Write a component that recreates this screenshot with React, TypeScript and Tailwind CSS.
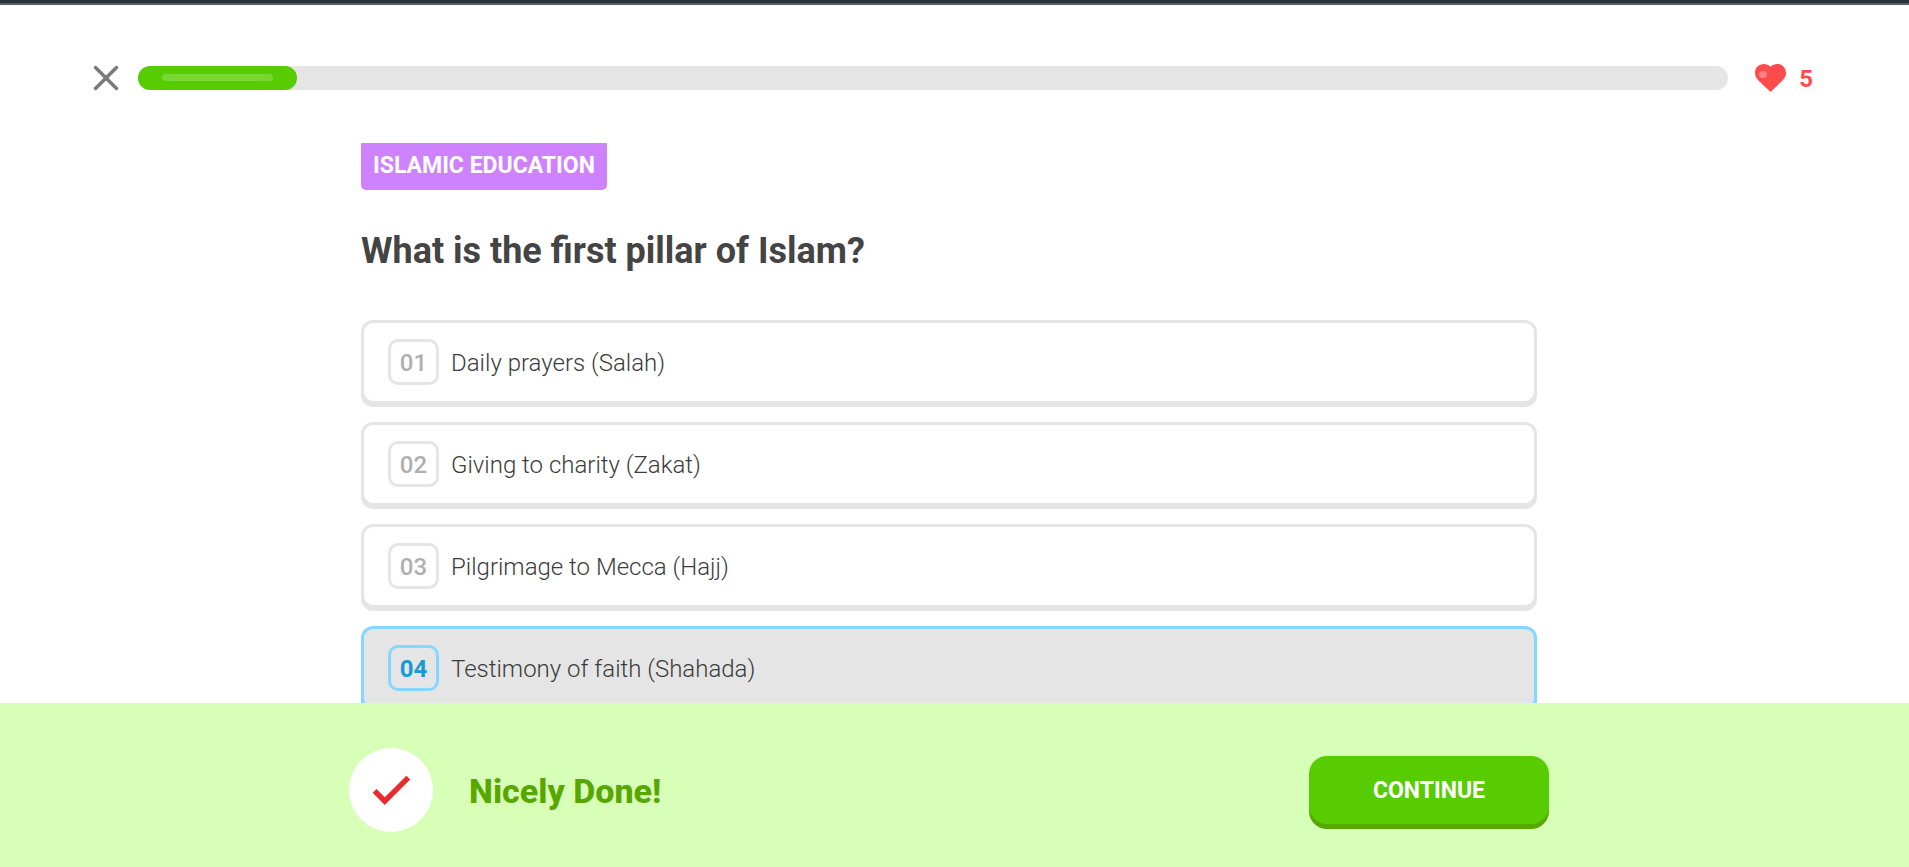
import { useState } from "react";
import { X } from "lucide-react";

const options = [
  "Daily prayers (Salah)",
  "Giving to charity (Zakat)",
  "Pilgrimage to Mecca (Hajj)",
  "Testimony of faith (Shahada)",
];

const progress = 10;

function HeartIcon() {
  return (
    <svg viewBox="0 0 31 28" className="h-7 w-[31px]" aria-hidden="true">
      <path
        fill="#ff4b4b"
        d="M15.5 2.800C13.700 1 11.300 0 8.800 0 3.900 0 0 3.800 0 8.800c0 2.800 1.200 5.300 3.200 7.500L15.500 28l12.300-11.700C29.800 14.100 31 11.600 31 8.800 31 3.800 27.100 0 22.200 0c-2.500 0-4.900 1-6.700 2.800z"
      />
      <rect x="4" y="7" width="8" height="7" rx="3.500" fill="#fff" fillOpacity="0.3" />
    </svg>
  );
}

function CheckIcon() {
  return (
    <svg viewBox="0 0 24 24" className="size-[50px]" aria-hidden="true">
      <path
        fill="#ea2b2b"
        d="M9 15.450 5.050 11.500l-1.850 1.850L9 19.150 21.200 7l-1.850-1.850-.35.350z"
      />
    </svg>
  );
}

export default function App() {
  const [selected, setSelected] = useState(3);

  return (
    <div className="flex h-screen flex-col border-t-3 border-[#263238] bg-white font-['Roboto',sans-serif] text-[#444444]">
      <div className="h-0.5 shrink-0 bg-[#546068]" />

      <header className="flex h-[138px] shrink-0 items-start pt-[52px] pr-24 pl-[85px]">
        <div className="flex h-[42px] flex-1 items-center">
          <button type="button" aria-label="Close" className="mr-[11px] text-[#7a7a7a]">
            <X size={42} strokeWidth={2} />
          </button>
          <div
            role="progressbar"
            aria-label="Lesson progress"
            aria-valuenow={progress}
            aria-valuemin={0}
            aria-valuemax={100}
            className="h-6 flex-1 rounded-full bg-[#e5e5e5]"
          >
            <div
              className="h-full rounded-full bg-[#58cc02] px-6 pt-2"
              style={{ width: `${progress}%` }}
            >
              <div className="h-[7px] rounded-full bg-white/20" />
            </div>
          </div>
          <div className="ml-[27px] flex items-center gap-[13px]">
            <HeartIcon />
            <span className="pt-0.5 text-[24px] leading-7 font-bold text-[#ff4b4b]">5</span>
          </div>
        </div>
      </header>

      <main className="min-h-0 flex-1 overflow-hidden pr-[11px]">
        <div className="mx-auto -mt-[3px] max-w-[1200px] px-3">
          <p className="flex h-[50px] w-fit items-center rounded-[5px] bg-[#ce82ff] px-3 pt-0.5 text-[23px] font-bold text-white uppercase">
            Islamic Education
          </p>
          <h1 className="mt-[39px] text-[36px] leading-[44px] font-bold">
            What is the first pillar of Islam?
          </h1>
          <ul className="mt-[47px] flex flex-col gap-[18px]">
            {options.map((option, i) => {
              const active = i === selected;
              return (
                <li key={option}>
                  <button
                    type="button"
                    aria-pressed={active}
                    onClick={() => setSelected(i)}
                    className={`flex w-full items-center gap-3 rounded-xl border-3 px-6 py-4 text-left ${
                      active
                        ? "border-[#84d8ff] bg-[#e5e5e5] shadow-[0_3px_0_#84d8ff]"
                        : "border-[#e5e5e5] bg-white shadow-[0_3px_0_#e5e5e5]"
                    }`}
                  >
                    <span
                      className={`flex h-[46px] w-[51px] items-center justify-center rounded-[10px] border-3 pt-0.5 text-[24px] ${
                        active
                          ? "border-[#84d8ff] font-bold text-[#1899d6]"
                          : "border-[#e5e5e5] font-medium text-[#afafaf]"
                      }`}
                    >
                      {String(i + 1).padStart(2, "0")}
                    </span>
                    <span className="pt-0.5 text-[24px] font-light text-[#3c3c3c]">{option}</span>
                  </button>
                </li>
              );
            })}
          </ul>
        </div>
      </main>

      <footer className="shrink-0 bg-[#d7ffb8] pt-[45px] pr-[11px] pb-[35px]">
        <div className="mx-auto flex max-w-[1200px] items-center justify-between">
          <div className="flex items-center gap-9">
            <span className="flex size-[84px] items-center justify-center rounded-full bg-white">
              <CheckIcon />
            </span>
            <h2 className="pt-0.5 text-[34px] font-extrabold text-[#58a700]">Nicely Done!</h2>
          </div>
          <button
            type="button"
            className="h-[68px] w-60 rounded-[18px] bg-[#58cc02] pt-0.5 text-[23px] font-bold text-white uppercase shadow-[0_5px_0_#58a700]"
          >
            Continue
          </button>
        </div>
      </footer>
    </div>
  );
}
